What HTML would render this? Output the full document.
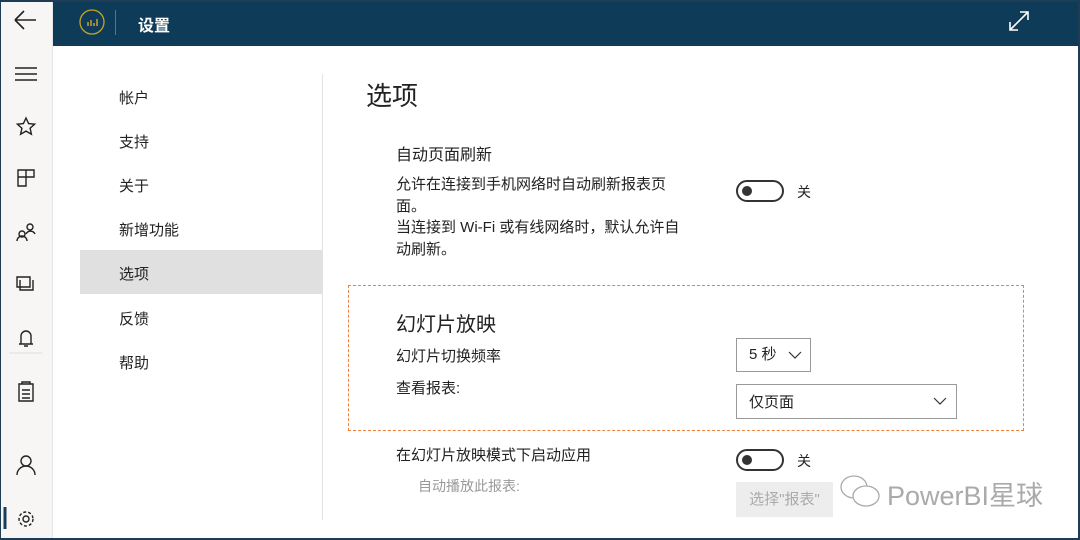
<!DOCTYPE html>
<html><head><meta charset="utf-8"><style>
*{margin:0;padding:0;box-sizing:border-box}
body{width:1080px;height:540px;overflow:hidden;background:#fff;font-family:"Liberation Sans","Noto Sans CJK SC",sans-serif;color:#222;position:relative}
.frame{position:absolute;inset:0;border:2px solid #1c3d55;border-left-width:1px;pointer-events:none;z-index:10}
.side{position:absolute;left:0;top:0;width:53px;height:540px;background:#f7f6f5;border-right:1px solid #e6e6e6}
.hdr{position:absolute;left:53px;top:0;right:0;height:46px;background:#0e3b57}
.abs{position:absolute}
.t{position:absolute;font-size:15px;white-space:nowrap}
.sel{position:absolute;left:80px;top:250px;width:242px;height:44px;background:#e0e0e0}
.tog{position:absolute;width:48px;height:22px;border:2px solid #333;border-radius:11px}
.tog::after{content:"";position:absolute;left:4px;top:4px;width:10px;height:10px;border-radius:50%;background:#333}
.dd{position:absolute;border:1px solid #999;background:#fff;font-size:15px;padding-left:12px;line-height:32px}
</style></head><body>
<div class="side"></div>
<svg class="abs" style="left:0;top:0" width="53" height="540" fill="none" stroke="#222" stroke-width="1.4">
<path d="M15 20H36M15 20l9-9M15 20l9 9" stroke-width="1.6"/>
<path d="M15 68H37M15 74H37M15 80H37" stroke-width="1.6"/>
<path d="M26 118l2.6 5.6 6 .6-4.5 4 1.3 6-5.4-3.1-5.4 3.1 1.3-6-4.5-4 6-.6z"/>
<path d="M18 170h16v7h-8v9h-8zM18 177h8M26 170v7"/>
<circle cx="22" cy="234" r="3"/><path d="M17 241a5 5 0 0 1 10 0"/><circle cx="30" cy="227" r="3"/><path d="M26 234a5 5 0 0 1 9 0"/>
<path d="M17 277h13v10H17zM20 280v10h13v-10"/>
<path d="M21 344v-8a5 5 0 0 1 10 0v8h2h-14M24 346h4"/>
<path d="M19 384h14v17H19zM22 384v-2h8v2M22 390h8M22 394h8M22 398h8"/>
<path d="M9 353h33" stroke="#ddd" stroke-width="1"/>
<circle cx="26" cy="461" r="5"/><path d="M17 475a9 9 0 0 1 18 0"/>
<circle cx="26" cy="519" r="3"/><circle cx="26" cy="519" r="7" stroke-dasharray="3 2"/>
<path d="M5 507v22" stroke="#1c3d55" stroke-width="3"/>
</svg>
<div class="hdr"></div>
<svg class="abs" style="left:78px;top:8px" width="30" height="30" fill="none"><circle cx="14" cy="14" r="12" stroke="#c9a227" stroke-width="1.3"/><path d="M10 18v-4M13 18v-6M16 18v-3M19 18v-7" stroke="#c9a227" stroke-width="1.5"/></svg>
<div class="abs" style="left:115px;top:10px;width:1px;height:25px;background:#5a7487"></div>
<div class="t" style="left:138px;top:12px;color:#fff;font-weight:bold;font-size:16px">设置</div>
<svg class="abs" style="left:1006px;top:8px" width="26" height="26" fill="none" stroke="#fff" stroke-width="1.6"><path d="M4 22L22 4M14 4h8v8M4 14v8h8"/></svg>
<div class="sel"></div>
<div class="t" style="left:119px;top:87px">帐户</div>
<div class="t" style="left:119px;top:131px">支持</div>
<div class="t" style="left:119px;top:175px">关于</div>
<div class="t" style="left:119px;top:219px">新增功能</div>
<div class="t" style="left:119px;top:263px">选项</div>
<div class="t" style="left:119px;top:308px">反馈</div>
<div class="t" style="left:119px;top:352px">帮助</div>
<div class="abs" style="left:322px;top:74px;width:1px;height:446px;background:#e2e2e2"></div>
<div class="t" style="left:366px;top:76px;font-size:26px">选项</div>
<div class="t" style="left:396px;top:141px;font-size:16px">自动页面刷新</div>
<div class="t" style="left:396px;top:174px;line-height:21.5px">允许在连接到手机网络时自动刷新报表页<br>面。<br>当连接到 Wi-Fi 或有线网络时，默认允许自<br>动刷新。</div>
<div class="tog" style="left:736px;top:180px"></div>
<div class="t" style="left:797px;top:182px;font-size:14px">关</div>
<div class="abs" style="left:348px;top:285px;width:676px;height:146px;border:1px dashed #ee8040"></div>
<div class="t" style="left:396px;top:308px;font-size:20px">幻灯片放映</div>
<div class="t" style="left:396px;top:345px">幻灯片切换频率</div>
<div class="dd" style="left:736px;top:338px;width:75px;height:34px">5 秒<svg class="abs" style="left:51px;top:12px" width="14" height="9" fill="none" stroke="#333" stroke-width="1.2"><path d="M1 1l6 6 6-6"/></svg></div>
<div class="t" style="left:396px;top:377px">查看报表:</div>
<div class="dd" style="left:736px;top:384px;width:221px;height:35px;line-height:36px">仅页面<svg class="abs" style="left:196px;top:12px" width="14" height="9" fill="none" stroke="#333" stroke-width="1.2"><path d="M1 1l6 6 6-6"/></svg></div>
<div class="t" style="left:396px;top:444px">在幻灯片放映模式下启动应用</div>
<div class="tog" style="left:736px;top:449px"></div>
<div class="t" style="left:797px;top:451px;font-size:14px">关</div>
<div class="t" style="left:418px;top:476px;color:#999;font-size:14px">自动播放此报表:</div>
<div class="abs" style="left:736px;top:482px;width:97px;height:35px;background:#ededed;color:#aaa;font-size:15px;line-height:35px;text-align:center">选择"报表"</div>
<svg class="abs" style="left:838px;top:472px" width="46" height="38" fill="none" stroke="#aaa" stroke-width="1.3"><ellipse cx="16" cy="15" rx="13" ry="11"/><ellipse cx="28" cy="24" rx="13" ry="10" fill="#fff"/></svg>
<div class="t" style="left:887px;top:474px;font-size:27px;color:#aaa">PowerBI星球</div>
<div class="frame"></div>
</body></html>
